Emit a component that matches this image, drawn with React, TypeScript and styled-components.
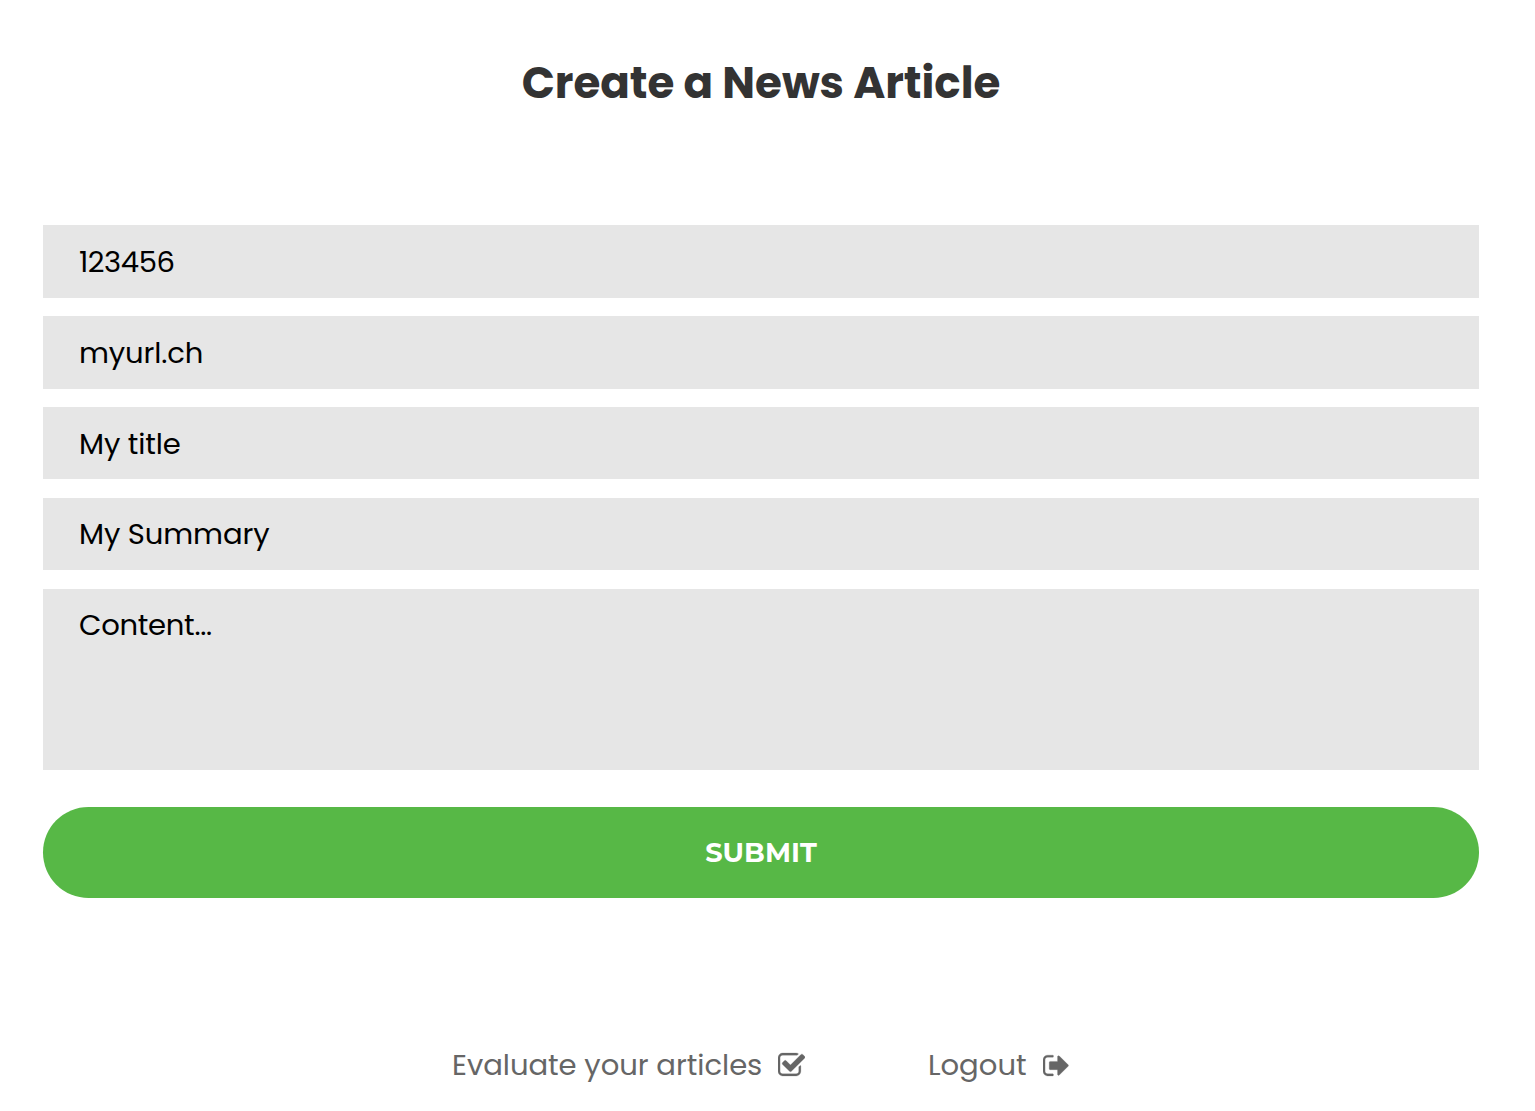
import React from 'react';
import styled, { createGlobalStyle } from 'styled-components';

const Global = createGlobalStyle`
  * { box-sizing: border-box; }
  body { margin: 0; background: #fff; overflow: hidden; }
`;

const font = `Poppins, Inter, "Open Sans", sans-serif`;

const Page = styled.main`
  height: 1111px;
  padding: 52px 56px 0 43px;
  font-family: ${font};
  display: flex;
  flex-direction: column;
`;

const Title = styled.h1`
  margin: 0 0 111px;
  height: 62px;
  line-height: 62px;
  text-align: center;
  font-size: 43.6px;
  font-weight: 700;
  letter-spacing: -0.03px;
  color: #333;
`;

const Form = styled.form`
  display: flex;
  flex-direction: column;
  gap: 18.2px;
`;

const Field = styled.input<{ $tracking?: number }>`
  height: 72.7px;
  border: 0;
  padding: 1.05px 36px 0;
  background: #e6e6e6;
  color: #000;
  font: 400 29.09px ${font};
  letter-spacing: ${(p) => p.$tracking ?? -0.12}px;
`;

const Area = styled.textarea`
  height: 181px;
  border: 0;
  resize: none;
  padding: 16px 36px;
  background: #e6e6e6;
  color: #000;
  font: 400 29.09px/40px ${font};
  letter-spacing: -0.3px;
`;

const Submit = styled.button`
  margin-top: 19px;
  height: 91px;
  border: 0;
  border-radius: 46px;
  background: #57b846;
  color: #fff;
  font: 700 27.27px Montserrat, Inter, sans-serif;
`;

const Links = styled.nav`
  margin-top: 144px;
  padding-left: 409px;
  display: flex;
  gap: 122.8px;
`;

const Link = styled.a<{ $gap: number; $tracking?: number }>`
  display: flex;
  align-items: center;
  height: 46px;
  gap: ${(p) => p.$gap}px;
  color: #666;
  font-size: 29.09px;
  letter-spacing: ${(p) => p.$tracking ?? 0}px;
  white-space: nowrap;
`;

const Glyph = styled.svg`
  width: 27px;
  height: 29.09px;
  margin-top: 1px;
  fill: currentColor;
  stroke: currentColor;
  stroke-width: 16;
`;

const CheckSquare = () => (
  <Glyph viewBox="64 0 1664 1792">
    <path d="M1472 930v318q0 119-84.5 203.5t-203.5 84.5h-832q-119 0-203.5-84.5t-84.5-203.5v-832q0-119 84.5-203.5t203.5-84.5h832q63 0 117 25 15 7 18 23 3 17-9 29l-49 49q-10 10-23 10-3 0-9-2-23-6-45-6h-832q-66 0-113 47t-47 113v832q0 66 47 113t113 47h832q66 0 113-47t47-113v-254q0-13 9-22l64-64q10-10 23-10 6 0 12 3 20 8 20 29zm231-489l-814 814q-24 24-57 24t-57-24l-430-430q-24-24-24-57t24-57l110-110q24-24 57-24t57 24l263 263 647-647q24-24 57-24t57 24l110 110q24 24 24 57t-24 57z" />
  </Glyph>
);

const SignOut = () => (
  <Glyph viewBox="64 0 1664 1792">
    <path d="M704 1440q0 4 1 20t.5 26.5-3 23.5-10 19.5-20.5 6.5h-320q-119 0-203.5-84.5t-84.5-203.5v-704q0-119 84.5-203.5t203.5-84.5h320q13 0 22.5 9.5t9.5 22.5q0 4 1 20t.5 26.5-3 23.5-10 19.5-20.5 6.5h-320q-66 0-113 47t-47 113v704q0 66 47 113t113 47h312l11.5 1 11.5 3 8 5.5 7 9 2 13.5zm928-544q0 26-19 45l-544 544q-19 19-45 19t-45-19-19-45v-288h-448q-26 0-45-19t-19-45v-384q0-26 19-45t45-19h448v-288q0-26 19-45t45-19 45 19l544 544q19 19 19 45z" />
  </Glyph>
);

export default function App() {
  return (
    <Page>
      <Global />
      <Title>Create a News Article</Title>
      <Form>
        <Field defaultValue="123456" $tracking={-0.45} />
        <Field defaultValue="myurl.ch" />
        <Field defaultValue="My title" />
        <Field defaultValue="My Summary" />
        <Area defaultValue="Content..." />
        <Submit type="button">SUBMIT</Submit>
      </Form>
      <Links>
        <Link $gap={15.9} $tracking={-0.04}>Evaluate your articles <CheckSquare /></Link>
        <Link $gap={16.4}>Logout <SignOut /></Link>
      </Links>
    </Page>
  );
}
